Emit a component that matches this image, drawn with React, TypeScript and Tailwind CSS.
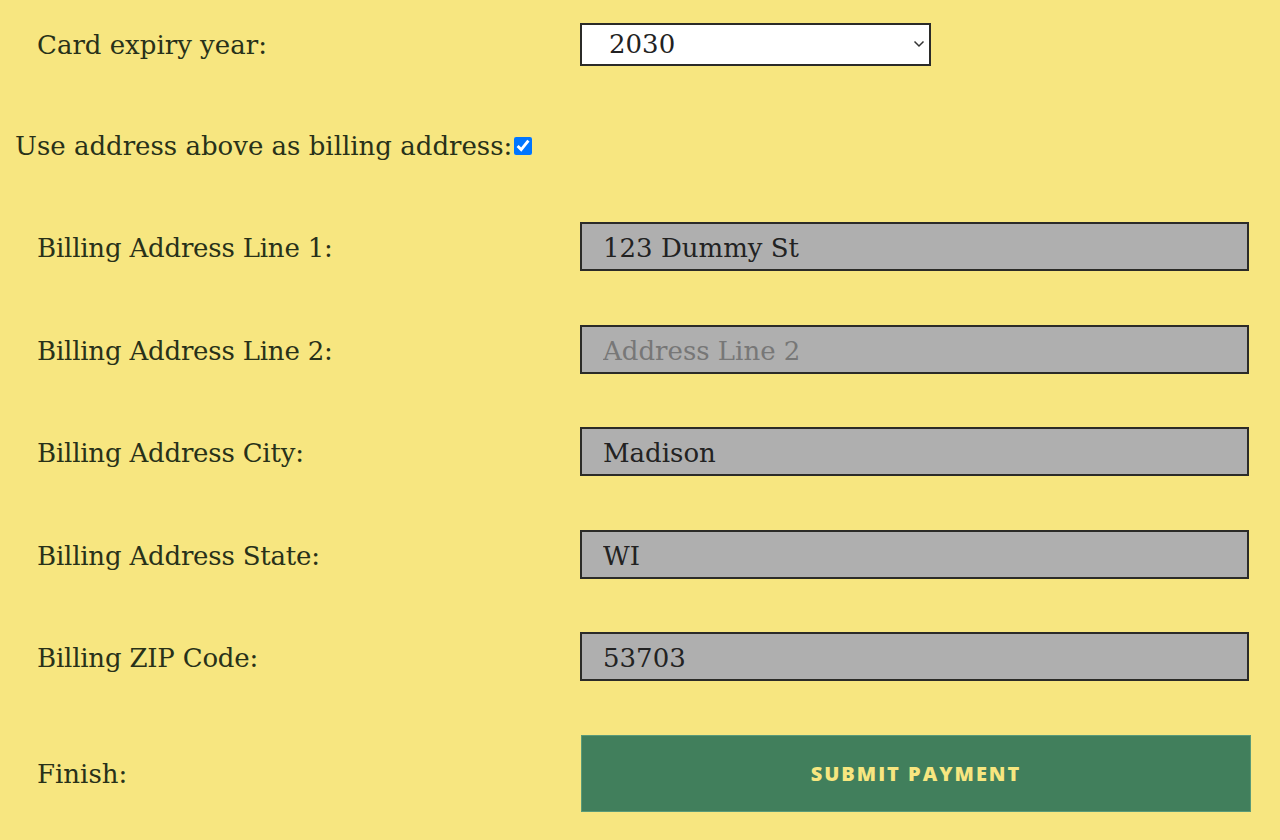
import React from "react";

const serif = { fontFamily: '"DejaVu Serif", "Liberation Serif", serif' } as React.CSSProperties;

function Row({ label, value, placeholder, mt }: { label: string; value?: string; placeholder?: string; mt: string }) {
  return (
    <div className={`flex items-center h-[49px] ${mt}`}>
      <div className="w-[580px] pl-[37px] pt-[3px] text-[26px] tracking-[-0.2px] text-[#283119]">{label}</div>
      <input
        readOnly
        defaultValue={value}
        placeholder={placeholder}
        className="w-[669px] h-[49px] bg-[#afafaf] border-2 border-[#2b2b28] pl-[21px] pt-[3px] text-[26px] text-[#222] placeholder:text-[#777] outline-none"
        style={serif}
      />
    </div>
  );
}

export default function App() {
  return (
    <div className="min-h-[840px] w-[1280px] bg-[#f7e680] pt-[23px]" style={serif}>
      <div className="flex items-center h-[43px]">
        <div className="w-[580px] pl-[37px] pt-[2px] text-[26px] text-[#283119]">Card expiry year:</div>
        <div className="relative w-[351px] h-[43px]">
          <select
            defaultValue="2030"
            className="appearance-none w-full h-full bg-white border-2 border-[#2b2b28] pl-[27px] pb-[2px] text-[26px] text-[#222] outline-none"
            style={serif}
          >
            <option>2030</option>
          </select>
          <svg className="absolute right-[6px] top-[17px] pointer-events-none" width="12" height="8" viewBox="0 0 12 8">
            <path d="M1.5 1.5 L6 6 L10.5 1.5" stroke="#333" strokeWidth="1.5" fill="none" />
          </svg>
        </div>
      </div>
      <div className="flex items-center h-[30px] mt-[65px] pl-[15px] text-[26px] text-[#283119]">
        <span>Use address above as billing address:</span>
        <input type="checkbox" defaultChecked className="w-[18px] h-[18px] m-0 ml-[2px] accent-[#0075ff]" />
      </div>
      <Row mt="mt-[61px]" label="Billing Address Line 1:" value="123 Dummy St" />
      <Row mt="mt-[54px]" label="Billing Address Line 2:" placeholder="Address Line 2" />
      <Row mt="mt-[53px]" label="Billing Address City:" value="Madison" />
      <Row mt="mt-[54px]" label="Billing Address State:" value="WI" />
      <Row mt="mt-[53px]" label="Billing ZIP Code:" value="53703" />
      <div className="flex items-center h-[77px] mt-[54px]">
        <div className="w-[581px] pl-[37px] pt-[2px] text-[26px] text-[#283119]">Finish:</div>
        <button
          className="w-[670px] h-[77px] bg-[#417f5c] border border-[#5a9a78] text-[#f7e680] text-[20px] font-extrabold tracking-[2px]"
          style={{ fontFamily: '"Open Sans", "Liberation Sans", sans-serif' }}
        >
          SUBMIT PAYMENT
        </button>
      </div>
    </div>
  );
}
